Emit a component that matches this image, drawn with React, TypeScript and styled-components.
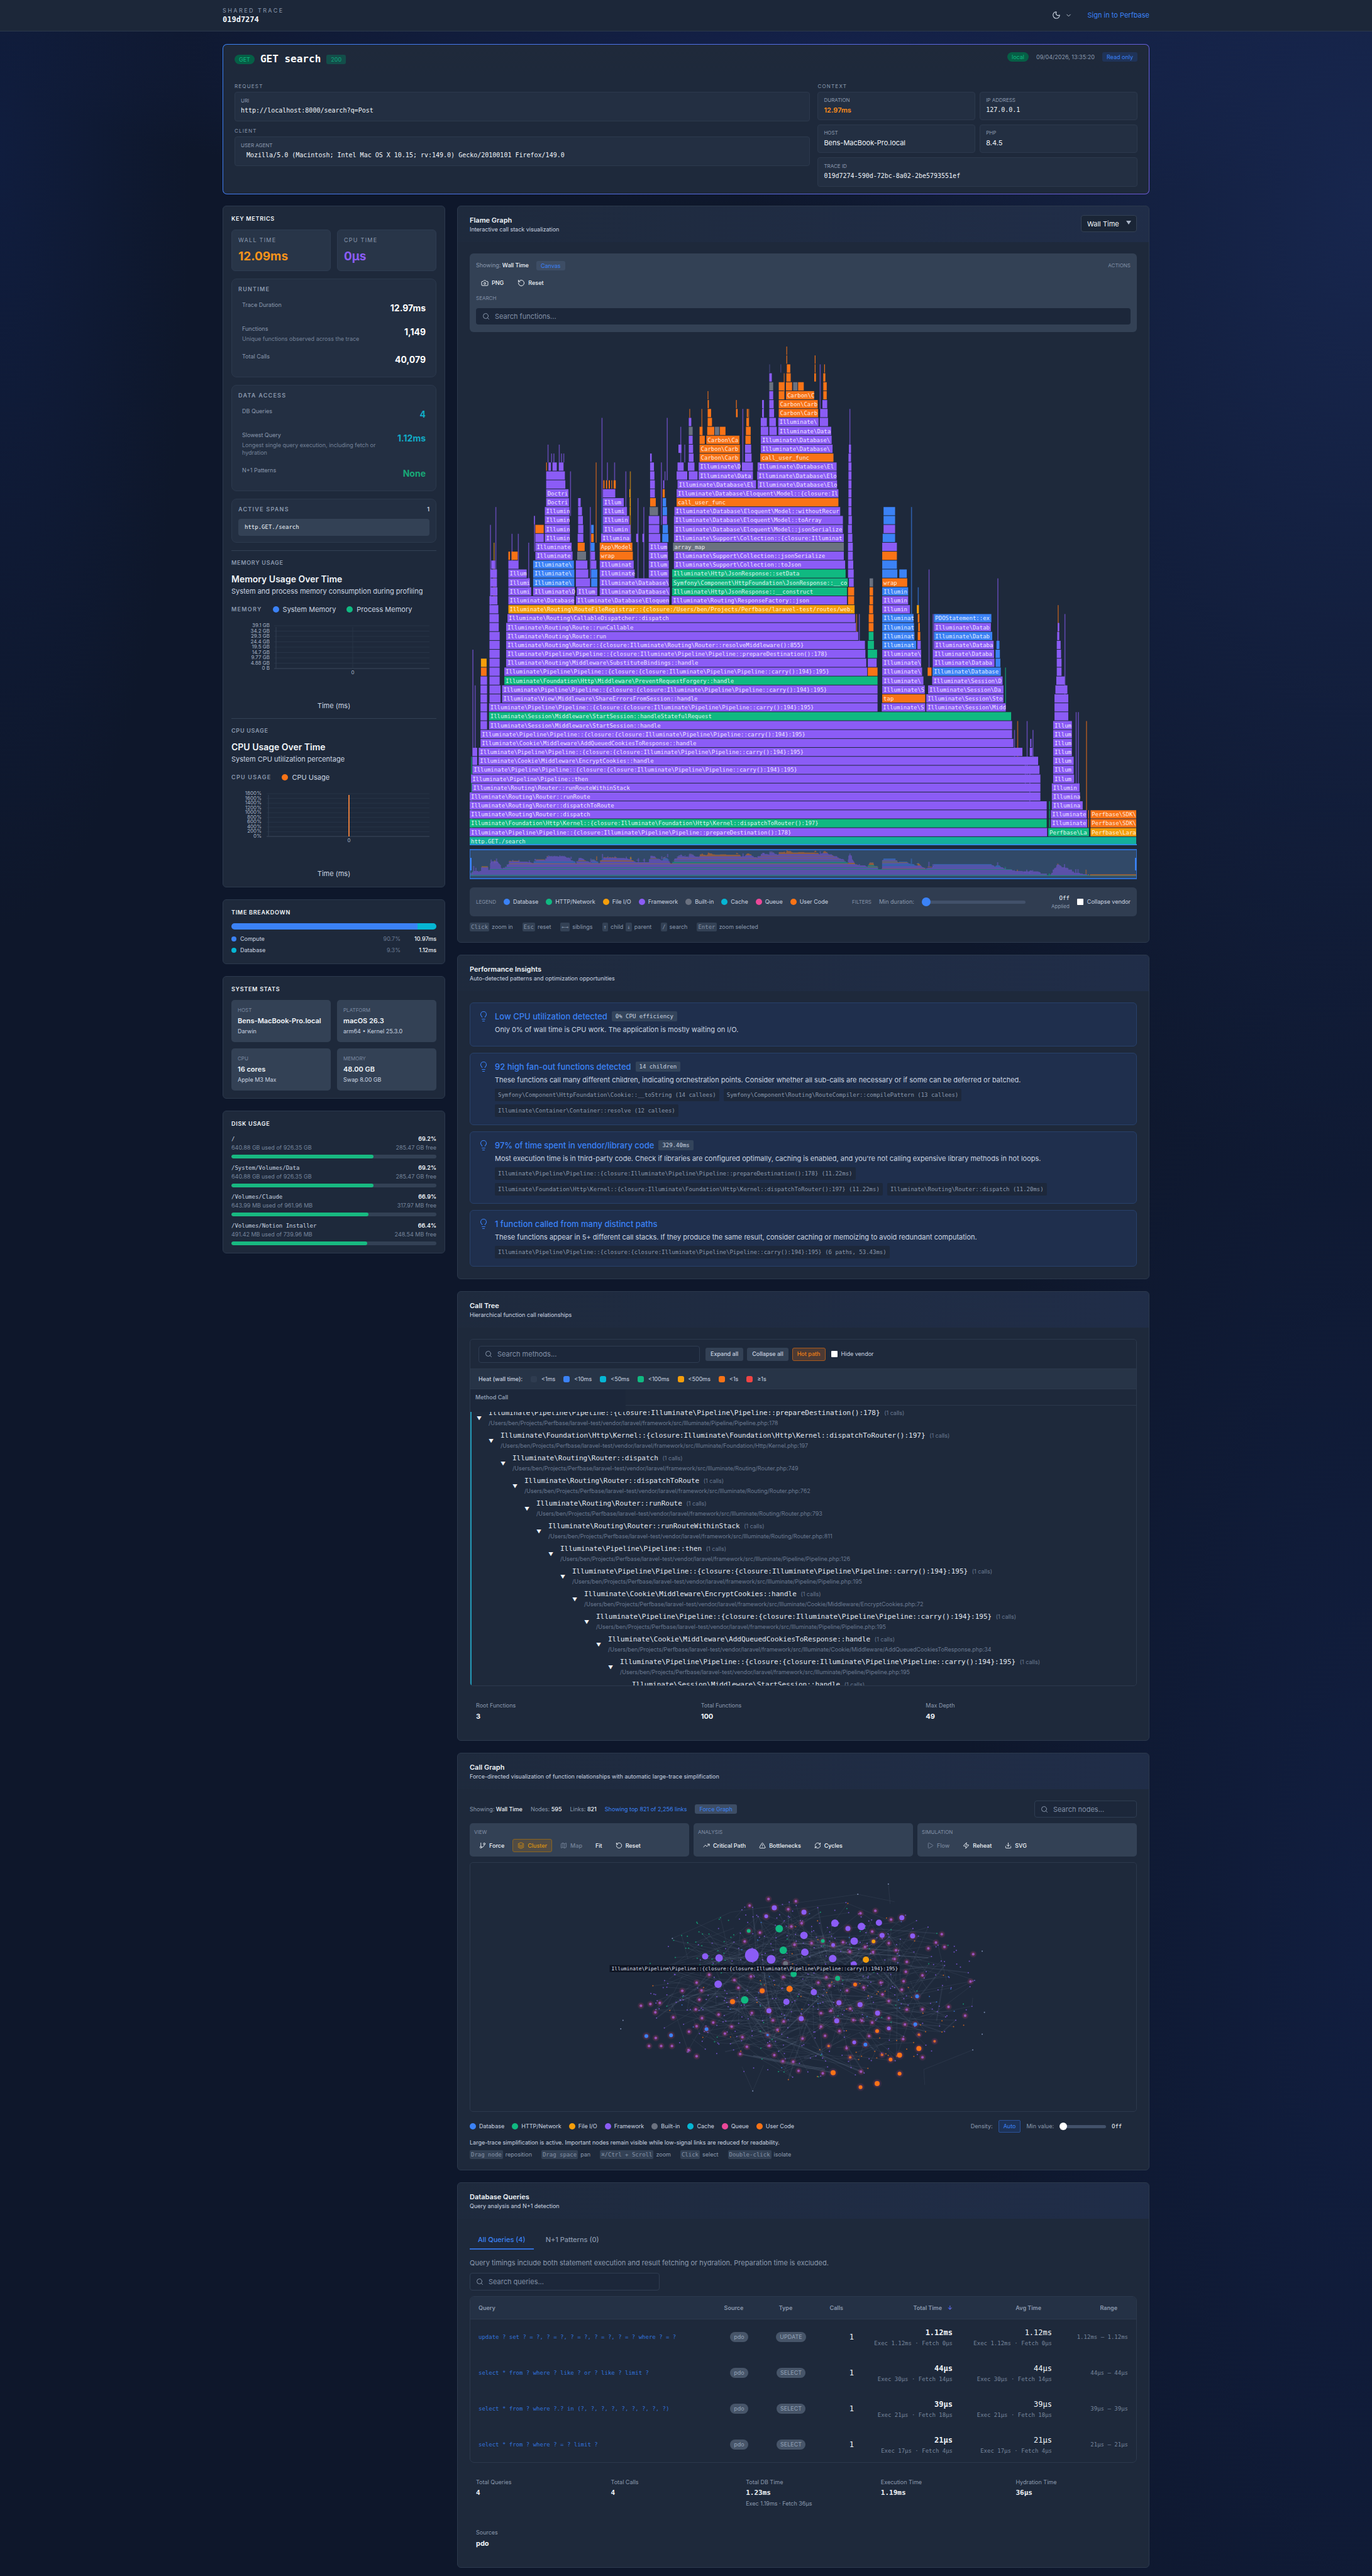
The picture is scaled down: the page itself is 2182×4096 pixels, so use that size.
import React from 'react';
import styled, { createGlobalStyle, css } from 'styled-components';
import {
  Camera, ChevronDown, Download, GitBranch, Layers, Lightbulb, Map as MapIcon, Moon, Play,
  RefreshCw, RotateCcw, Search, TrendingUp, TriangleAlert, Zap,
} from 'lucide-react';

const sans = `Inter, "Liberation Sans", sans-serif`;
const mono = `"DejaVu Sans Mono", "Liberation Mono", monospace`;

const c = {
  card: '#1e293b',
  inset: '#232f42',
  panel: '#334155',
  line: '#2c394d',
  text: '#f1f5f9',
  soft: '#cbd5e1',
  muted: '#8b99ae',
  dim: '#6b7a92',
  blue: '#3b82f6',
  green: '#10b981',
  amber: '#f59e0b',
  violet: '#8b5cf6',
  grey: '#6b7280',
  cyan: '#06b6d4',
  pink: '#ec4899',
  orange: '#f97316',
};

const Global = createGlobalStyle`
  *, *::before, *::after { box-sizing: border-box; }
  body {
    margin: 0;
    color: ${c.soft};
    font: 9px/14px ${sans};
    background:
      radial-gradient(ellipse 45% 38% at 100% 8%, #17264e 0%, rgba(23, 38, 78, 0) 100%),
      radial-gradient(ellipse 60% 6% at 60% 2%, #14214a 0%, rgba(20, 33, 74, 0) 100%),
      radial-gradient(ellipse 14% 30% at 0% 6%, #101d3e 0%, rgba(16, 29, 62, 0) 100%),
      radial-gradient(ellipse 30% 50% at 100% 75%, #111e40 0%, rgba(17, 30, 64, 0) 100%),
      #0e172b;
  }
  h1, h2, h3, p, dl, dd, ul { margin: 0; padding: 0; }
  ul { list-style: none; }
  a { text-decoration: none; }
  button, input, select { font: inherit; color: inherit; }
`;

/* ---------- page frame ---------- */

const Shell = styled.div`
  width: calc(100% - 40px);
  max-width: 1474px;
  margin: 0 auto;
`;

const TopBar = styled.header`
  background: #1c2739;
  border-bottom: 1px solid ${c.line};
`;

const TopInner = styled(Shell)`
  display: flex;
  justify-content: space-between;
  align-items: center;
  padding: 9px 0 10px;
`;

const TraceTag = styled.div`
  line-height: 15px;
  letter-spacing: 0.27em;
  color: ${c.muted};
`;

const TraceName = styled.div`
  font: 700 12px/15px ${mono};
  color: ${c.text};
`;

const TopActions = styled.div`
  display: flex;
  align-items: center;
  gap: 24px;
`;

const ThemeButton = styled.button`
  display: flex;
  align-items: center;
  gap: 7px;
  padding: 0;
  border: 0;
  background: none;
  color: ${c.soft};
`;

const SignIn = styled.a`
  font-size: 11px;
  color: ${c.blue};
`;

const Main = styled(Shell).attrs({ as: 'main' })`
  display: grid;
  grid-template-columns: 354px minmax(0, 1fr);
  align-items: start;
  gap: 18px 19px;
  padding: 20px 0 16px;
`;

const Column = styled.div`
  display: flex;
  flex-direction: column;
  gap: 19px;
  min-width: 0;
`;

/* ---------- hero ---------- */

const Hero = styled.section`
  grid-column: 1 / -1;
  border: 1px solid transparent;
  border-radius: 7px;
  background:
    linear-gradient(180deg, #1f293a, #1e293b 48px, #1e293b) padding-box,
    linear-gradient(135deg, ${c.blue}, #6d5bd8) border-box;
`;

const HeroHead = styled.div`
  display: flex;
  justify-content: space-between;
  align-items: flex-start;
  height: 45px;
  padding: 12px 18px 0;
`;

const HeroTitle = styled.div`
  display: flex;
  align-items: center;
  gap: 9px;
  height: 22px;
`;

const HeroName = styled.h1`
  font: 700 16px/22px ${mono};
  color: #fff;
`;

const HeroMeta = styled.div`
  display: flex;
  align-items: center;
  gap: 12px;
  color: ${c.muted};
`;

type Tone = 'green' | 'teal' | 'blue' | 'plain';
const tones = {
  green: css`background: #065f46; color: #10b981; border-radius: 8px;`,
  teal: css`background: #134e4a; color: #10a37a; border-radius: 3px;`,
  blue: css`background: #1f3358; color: ${c.blue}; border-radius: 3px;`,
  plain: css`background: #3d4d65; color: ${c.blue}; border-radius: 3px;`,
};
const Badge = styled.span<{ $tone: Tone }>`
  padding: 0 7px;
  line-height: 15px;
  ${({ $tone }) => tones[$tone]}
`;

const HeroBody = styled.div`
  display: grid;
  grid-template-columns: minmax(0, 9fr) minmax(0, 5fr);
  gap: 12px;
  padding: 16px 18px 11px;
`;

const GroupLabel = styled.h2`
  margin-bottom: 4px;
  font-size: 8px;
  font-weight: 400;
  line-height: 10px;
  letter-spacing: 0.15em;
  color: ${c.muted};
`;

const Stack = styled.div<{ $gap: number }>`
  display: flex;
  flex-direction: column;
  gap: ${({ $gap }) => $gap}px;
`;

const Pair = styled.div`
  display: grid;
  grid-template-columns: 1fr 1fr;
  gap: 7px;
`;

const Field = styled.div<{ $wide?: boolean }>`
  grid-column: ${({ $wide }) => ($wide ? '1 / -1' : 'auto')};
  padding: ${({ $wide }) => ($wide ? 7 : 6)}px 9px;
  border: 1px solid ${c.line};
  border-radius: 4px;
  background: ${c.inset};
`;

const FieldLabel = styled.div`
  margin-bottom: 1px;
  font-size: 8px;
  line-height: 12px;
  color: ${c.muted};
`;

const FieldValue = styled.div<{ $mono?: boolean; $hot?: boolean; $inset?: boolean }>`
  font: ${({ $mono, $hot }) =>
    $mono ? `400 10px/18px ${mono}` : `${$hot ? 600 : 400} 11px/18px ${sans}`};
  padding-left: ${({ $inset }) => ($inset ? 9 : 0)}px;
  color: ${({ $hot }) => ($hot ? '#fb8c1a' : c.text)};
`;

/* ---------- sidebar ---------- */

const SideCard = styled.section<{ $flush?: boolean }>`
  padding: 13px 13px ${({ $flush }) => ($flush ? 1 : 12)}px;
  border: 1px solid ${c.line};
  border-radius: 6px;
  background: ${c.card};
`;

const SideTitle = styled.h2`
  margin-bottom: 10px;
  font-size: 9px;
  line-height: 14px;
  font-weight: 600;
  letter-spacing: 0.08em;
  color: ${c.text};
`;

const TileGrid = styled.div`
  display: grid;
  grid-template-columns: 1fr 1fr;
  gap: 10px;
`;

const MetricTile = styled.div`
  padding: 9px 10px;
  border: 1px solid #2e3c51;
  border-radius: 6px;
  background: #283548;
`;

const SpacedLabel = styled.h3`
  font-size: 9px;
  line-height: 14px;
  font-weight: 400;
  letter-spacing: 0.14em;
  color: ${c.muted};
`;

const StrongLabel = styled(SpacedLabel)`
  font-weight: 600;
`;

const BigValue = styled.div<{ $color: string }>`
  margin-top: 6px;
  font-size: 19px;
  line-height: 26px;
  font-weight: 700;
  color: ${({ $color }) => $color};
`;

const Group = styled.div`
  margin-top: 12px;
  padding: 9px 10px 8px;
  border: 1px solid ${c.line};
  border-radius: 8px;
  background: ${c.inset};
`;

const StatRow = styled.div`
  display: flex;
  justify-content: space-between;
  gap: 16px;
  padding: 7px 6px;
  &:first-of-type { margin-top: 4px; }
`;

const StatText = styled.div`
  max-width: 220px;
  color: ${c.muted};
`;

const StatNote = styled.p`
  margin: 3px 0 1px;
  line-height: 12px;
  color: #748298;
`;

const StatValue = styled.div<{ $color?: string }>`
  font-size: 14px;
  line-height: 24px;
  font-weight: 700;
  color: ${({ $color }) => $color ?? '#fff'};
`;

const SpanHead = styled.div`
  display: flex;
  justify-content: space-between;
  font-weight: 600;
`;

const SpanChip = styled.div`
  margin: 8px 0 2px;
  padding: 0 10px;
  border-radius: 4px;
  background: ${c.panel};
  font: 9px/27px ${mono};
  color: ${c.text};
`;

const ChartSection = styled.section<{ $first?: boolean }>`
  margin-top: ${({ $first }) => ($first ? 12 : 0)}px;
  padding: 12px 0;
  border-top: 1px solid #334155;
`;

const ChartTag = styled(SideTitle)`
  margin: 0;
  color: ${c.muted};
`;

const ChartTitle = styled.h3`
  margin-top: 9px;
  font-size: 14px;
  line-height: 20px;
  font-weight: 600;
  color: ${c.text};
`;

const ChartSub = styled.p`
  margin-top: 1px;
  font-size: 11px;
  line-height: 16px;
`;

const ChartLegend = styled.div`
  display: flex;
  align-items: center;
  gap: 17px;
  margin-top: 13px;
  font-size: 11px;
  line-height: 16px;
`;

const Key = styled.span<{ $gap?: number }>`
  display: inline-flex;
  align-items: center;
  gap: ${({ $gap }) => $gap ?? 5}px;
`;

const Dot = styled.i<{ $color: string; $size?: number; $square?: boolean }>`
  width: ${({ $size }) => $size ?? 10}px;
  height: ${({ $size }) => $size ?? 10}px;
  border-radius: ${({ $square }) => ($square ? '3px' : '50%')};
  background: ${({ $color }) => $color};
`;

const Plot = styled.svg`
  display: block;
  width: 100%;
  margin-top: 8px;
`;

const AxisTitle = styled.div`
  margin-top: 3px;
  font-size: 11px;
  line-height: 16px;
  text-align: center;
`;

const SplitBar = styled.div`
  display: flex;
  height: 10px;
  margin-bottom: 6px;
  border-radius: 5px;
  overflow: hidden;
`;

const SplitPart = styled.div<{ $color: string }>`
  background: ${({ $color }) => $color};
`;

const BreakRow = styled.div`
  display: grid;
  grid-template-columns: 1fr auto 57px;
  line-height: 18px;
`;

const Share = styled.span`
  color: ${c.dim};
`;

const Amount = styled.span`
  text-align: right;
  font-weight: 500;
  color: ${c.text};
`;

const SystemTile = styled.div`
  padding: 10px;
  border-radius: 5px;
  background: ${c.panel};
`;

const TileLabel = styled.div`
  font-size: 8px;
  line-height: 13px;
  color: #7b8aa1;
`;

const TileValue = styled.div`
  margin: 1px 0;
  font-size: 11px;
  line-height: 18px;
  font-weight: 600;
  color: ${c.text};
`;

const DiskLine = styled.div<{ $dim?: boolean }>`
  display: flex;
  justify-content: space-between;
  line-height: ${({ $dim }) => ($dim ? 13 : 14)}px;
  color: ${({ $dim }) => ($dim ? '#76859b' : c.soft)};
`;

const DiskPath = styled.span`
  font-family: ${mono};
`;

const DiskPct = styled.strong`
  font-weight: 600;
  color: ${c.text};
`;

const DiskTrack = styled.div`
  height: 6px;
  margin-top: 5px;
  border-radius: 3px;
  background: ${c.panel};
  overflow: hidden;
`;

const DiskFill = styled.div`
  height: 100%;
  border-radius: 3px;
  background: #18b981;
`;

/* ---------- main cards ---------- */

const Card = styled.section`
  border: 1px solid ${c.line};
  border-radius: 6px;
  background: ${c.card};
  overflow: hidden;
`;

const CardHead = styled.header`
  display: flex;
  justify-content: space-between;
  height: 57px;
  padding: 14px 19px 0;
  background: linear-gradient(90deg, rgba(59, 130, 246, 0.01), rgba(59, 100, 246, 0.07));
`;

const CardTitle = styled.h2`
  font-size: 11px;
  line-height: 16px;
  font-weight: 600;
  color: ${c.text};
`;

const CardBody = styled.div`
  padding: 18px 19px 19px;
`;

const MetricSelect = styled.select`
  appearance: none;
  width: 89px;
  height: 27px;
  padding: 0 9px;
  border: 1px solid #334155;
  border-radius: 4px;
  background: #1a2536 url("data:image/svg+xml,%3Csvg xmlns='http://www.w3.org/2000/svg' width='8' height='6'%3E%3Cpath d='M0 0h8L4 6z' fill='%23aab6c8'/%3E%3C/svg%3E") no-repeat right 8px top 8px;
  font-size: 11px;
  color: ${c.text};
`;

const FlamePanel = styled.div`
  padding: 10px 10px 12px;
  border-radius: 6px;
  background: ${c.panel};
`;

const Line = styled.div<{ $gap: number; $top?: number; $between?: boolean }>`
  display: flex;
  align-items: center;
  justify-content: ${({ $between }) => ($between ? 'space-between' : 'flex-start')};
  gap: ${({ $gap }) => $gap}px;
  margin-top: ${({ $top }) => $top ?? 0}px;
`;

const Caption = styled.span`
  font-size: 8px;
  line-height: 12px;
  color: #8290a6;
`;

const BlockCaption = styled.label`
  display: block;
  margin: 8px 0 10px;
  font-size: 8px;
  line-height: 12px;
  color: #8290a6;
`;

const Muted = styled.span`
  line-height: 18px;
  color: ${c.muted};
  b { font-weight: 500; color: ${c.text}; }
`;

const ToolButton = styled.button<{ $on?: boolean; $off?: boolean }>`
  display: inline-flex;
  align-items: center;
  gap: 5px;
  height: 21px;
  padding: 0 7px;
  border: 1px solid ${({ $on }) => ($on ? '#8a6420' : 'transparent')};
  border-radius: 3px;
  background: ${({ $on }) => ($on ? '#514c44' : 'transparent')};
  font-weight: 500;
  color: ${({ $on, $off }) => ($on ? '#d9910f' : $off ? '#76849a' : c.text)};
`;

const SearchBox = styled.label<{ $width?: number; $height?: number; $bare?: boolean }>`
  display: flex;
  align-items: center;
  gap: 8px;
  width: ${({ $width }) => ($width ? `${$width}px` : '100%')};
  height: ${({ $height }) => $height ?? 27}px;
  padding: 0 9px;
  border: 1px solid ${({ $bare }) => ($bare ? 'transparent' : '#2f3d52')};
  border-radius: 4px;
  background: #1c273a;
  color: ${c.muted};
  svg { flex: none; }
`;

const SearchInput = styled.input`
  flex: 1;
  min-width: 0;
  padding: 0;
  border: 0;
  outline: 0;
  background: none;
  font-size: 11px;
  &::placeholder { color: #8290a6; opacity: 1; }
`;

const FlameSvg = styled.svg`
  display: block;
  width: 100%;
  margin-top: 23px;
`;

const MiniMap = styled.div`
  margin-top: 5px;
  height: 48px;
  border: solid #2f6fd0;
  border-width: 2px 1px;
  background: #314968;
  svg { display: block; width: 100%; height: 44px; }
`;

const LegendPanel = styled.div`
  display: flex;
  align-items: center;
  justify-content: space-between;
  height: 46px;
  margin-top: 13px;
  padding: 0 10px;
  border-radius: 6px;
  background: #303d51;
`;

const Range = styled.input<{ $width: number; $thumb: string; $size: number }>`
  appearance: none;
  width: ${({ $width }) => $width}px;
  height: 5px;
  margin: 0;
  border-radius: 3px;
  background: #42516a;
  &::-webkit-slider-thumb {
    appearance: none;
    width: ${({ $size }) => $size}px;
    height: ${({ $size }) => $size}px;
    border-radius: 50%;
    background: ${({ $thumb }) => $thumb};
  }
`;

const OffValue = styled.div`
  width: 58px;
  text-align: right;
  font: 9px/14px ${mono};
  color: ${c.text};
  small { display: block; font: 8px/12px ${sans}; color: ${c.muted}; }
`;

const GraphOff = styled(OffValue)`
  width: 40px;
  text-align: left;
`;

const Check = styled.input`
  appearance: none;
  width: 10px;
  height: 10px;
  margin: 0;
  border-radius: 1px;
  background: #fff;
`;

const Hints = styled.ul`
  display: flex;
  gap: 15px;
  margin: 10px 0 -2px;
  color: ${c.muted};
`;

const Hint = styled.li`
  display: flex;
  gap: 4px;
`;

const Kbd = styled.kbd`
  padding: 0 2px;
  border-radius: 2px;
  background: ${c.panel};
  font: 9px/14px ${mono};
  color: #8491a6;
`;

/* ---------- insights ---------- */

const Insight = styled.article`
  display: flex;
  gap: 9px;
  padding: 12px;
  border: 1px solid #28416b;
  border-radius: 6px;
  background: #1f2f4d;
  color: ${c.blue};
  & + & { margin-top: 10px; }
  > svg { flex: none; }
`;

const InsightTitle = styled.h3`
  font-size: 13px;
  line-height: 18px;
  font-weight: 500;
`;

const InsightTag = styled.span`
  padding: 0 6px;
  border-radius: 2px;
  background: #33445b;
  font: 9px/16px ${mono};
  color: ${c.soft};
`;

const InsightText = styled.p`
  margin: 3px 0 5px;
  font-size: 11px;
  line-height: 18px;
  color: ${c.soft};
`;

const Chips = styled.div`
  display: flex;
  flex-wrap: wrap;
  gap: 5px 7px;
`;

const Chip = styled.code`
  padding: 0 5px;
  border-radius: 2px;
  background: #1d283b;
  font: 9px/20px ${mono};
  color: ${c.muted};
`;

/* ---------- call tree ---------- */

const TreeBox = styled.div`
  border: 1px solid ${c.line};
  border-radius: 5px;
  overflow: hidden;
`;

const TreeTools = styled.div`
  display: flex;
  align-items: center;
  gap: 9px;
  height: 46px;
  padding: 0 13px;
`;

const SolidButton = styled.button<{ $hot?: boolean }>`
  height: 21px;
  padding: 0 7px;
  border: 1px solid ${({ $hot }) => ($hot ? '#a85a1e' : 'transparent')};
  border-radius: 3px;
  background: ${({ $hot }) => ($hot ? '#4d3a33' : c.panel)};
  font-weight: 500;
  color: ${({ $hot }) => ($hot ? '#f07f16' : c.soft)};
`;

const HeatBar = styled.div`
  display: flex;
  align-items: center;
  gap: 13px;
  height: 33px;
  padding: 0 13px;
  border: solid ${c.line};
  border-width: 1px 0;
  background: #273447;
  b { font-weight: 500; }
`;

const TreeHead = styled.div`
  height: 26px;
  border-bottom: 1px solid ${c.line};
`;

const TreeHeadCell = styled.div`
  position: relative;
  width: 247px;
  height: 36px;
  padding: 6px 8px;
  background: #1c273a;
  font-weight: 600;
  color: ${c.muted};
`;

const TreeList = styled.div`
  height: 445px;
  padding-top: 4px;
  border-left: 2px solid #2197b5;
  overflow: hidden;
`;

const TreeRow = styled.div<{ $depth: number }>`
  display: flex;
  align-items: center;
  gap: 8px;
  height: 36px;
  padding: 0 0 5px ${({ $depth }) => 5 + $depth * 19}px;
`;

const Caret = styled.button`
  width: 14px;
  padding: 0;
  border: 0;
  background: none;
  font-size: 8px;
  color: ${c.text};
`;

const TreeName = styled.div`
  font: 11px/16px ${mono};
  color: #e2e8f0;
  white-space: nowrap;
  small { font: 9px/16px ${sans}; color: ${c.dim}; }
`;

const TreePath = styled.div`
  margin-top: 1px;
  color: ${c.dim};
  white-space: nowrap;
`;

const StatGrid = styled.dl<{ $cols: number }>`
  display: grid;
  grid-template-columns: repeat(${({ $cols }) => $cols}, minmax(0, 1fr));
  gap: 12px;
  margin-top: 14px;
`;

const Stat = styled.div`
  padding: 10px;
  dt { color: ${c.muted}; }
`;

const StatFigure = styled.dd<{ $mono?: boolean }>`
  margin-top: 1px;
  font: 700 11px/18px ${({ $mono }) => ($mono ? mono : sans)};
  color: ${c.text};
`;

const StatExtra = styled.dd`
  margin-top: 1px;
  color: ${c.muted};
`;

/* ---------- call graph ---------- */

const PanelRow = styled.div`
  display: grid;
  grid-template-columns: repeat(3, minmax(0, 1fr));
  gap: 7px;
  margin: 9px 0;
`;

const ToolPanel = styled.div`
  height: 53px;
  padding: 7px;
  border-radius: 5px;
  background: ${c.panel};
`;

const GraphFrame = styled.div`
  border: 1px solid ${c.line};
  border-radius: 5px;
  overflow: hidden;
  svg { display: block; width: 100%; }
`;

const AutoButton = styled.button`
  height: 20px;
  padding: 0 7px;
  border: 1px solid #2a5199;
  border-radius: 2px;
  background: #1d3359;
  color: ${c.blue};
`;

const GraphNote = styled.p`
  margin: 8px 0 -6px;
  line-height: 16px;
  color: ${c.soft};
`;

const LinkNote = styled.span`
  color: ${c.blue};
`;

/* ---------- queries ---------- */

const Tabs = styled.div`
  display: flex;
  gap: 6px;
`;

const Tab = styled.button<{ $on?: boolean }>`
  padding: 6px 13px 5px;
  border: 0;
  border-bottom: 2px solid ${({ $on }) => ($on ? '#336fd6' : 'transparent')};
  background: none;
  font-size: 11px;
  line-height: 18px;
  font-weight: 500;
  color: ${({ $on }) => ($on ? c.blue : c.muted)};
`;

const Intro = styled.p`
  margin: 12px 0 7px;
  font-size: 11px;
  line-height: 18px;
  color: ${c.muted};
`;

const TableFrame = styled.div`
  margin-top: 9px;
  border: 1px solid ${c.line};
  border-radius: 7px;
  overflow: hidden;
`;

const Table = styled.table`
  width: 100%;
  table-layout: fixed;
  border-collapse: collapse;
`;

const Col = styled.col<{ $width?: number }>`
  width: ${({ $width }) => ($width ? `${$width}px` : 'auto')};
`;

type Align = 'left' | 'center' | 'right';

const Th = styled.th<{ $align?: Align }>`
  height: 35px;
  padding: 0 13px;
  border-bottom: 1px solid ${c.line};
  background: #243145;
  text-align: ${({ $align }) => $align ?? 'left'};
  font-weight: 600;
  white-space: nowrap;
  color: ${c.muted};
`;

const SortMark = styled.span`
  display: inline-block;
  width: 17px;
  color: #5b6cf0;
`;

const Td = styled.td<{ $align?: Align }>`
  height: 57px;
  padding: 0 13px;
  text-align: ${({ $align }) => $align ?? 'left'};
  font-family: ${mono};
  white-space: nowrap;
  color: #77869c;
`;

const QueryText = styled.a`
  color: #3273dc;
`;

const Pill = styled.span`
  display: inline-block;
  padding: 0 6px;
  border-radius: 8px;
  background: #475569;
  font: 9px/16px ${sans};
  color: #94a3b8;
`;

const CellFigure = styled.div<{ $bold?: boolean }>`
  font-size: 12px;
  line-height: 20px;
  font-weight: ${({ $bold }) => ($bold ? 700 : 400)};
  color: ${c.text};
`;

/* ---------- flame graph data ---------- */

const NS = 'Illuminate\\';
const PIPE = `${NS}Pipeline\\Pipeline::{closure:{closure:${NS}Pipeline\\Pipeline::carry():194}:195}`;
const PREP = `${NS}Pipeline\\Pipeline::{closure:${NS}Pipeline\\Pipeline::prepareDestination():178}`;
const KERN = `${NS}Foundation\\Http\\Kernel::{closure:${NS}Foundation\\Http\\Kernel::dispatchToRouter():197}`;
const DB = `${NS}Database\\Eloquent\\Builder::get`;
const SES = `${NS}Session\\`;

const shade: Record<string, string> = {
  v: c.violet, g: c.green, b: c.blue, o: c.orange, a: c.amber, s: c.grey, t: '#14b09c', d: '#4a4a8a',
};

/* each row, from the root up: colour, start, end, label */
type Frame = [string, number, number, string?];
const T0 = 40;
const T1 = 1523;
const rows: Frame[][] = [
  [['t', 40, 1523, 'http.GET./search']],
  [['v', 40, 1325, PREP], ['g', 1326, 1418, 'Perfbase\\Laravel\\Middleware'], ['a', 1420, 1523, 'Perfbase\\Laravel\\Trace']],
  [['g', 40, 1324, KERN], ['g', 1328, 1331], ['v', 1332, 1414, DB], ['o', 1415, 1418], ['o', 1420, 1523, 'Perfbase\\SDK\\Client']],
  [['v', 40, 1324, `${NS}Routing\\Router::dispatch`], ['g', 1328, 1331], ['v', 1332, 1413, DB], ['o', 1415, 1418], ['o', 1420, 1523, 'Perfbase\\SDK\\Client']],
  [['v', 40, 1324, `${NS}Routing\\Router::dispatchToRoute`], ['g', 1328, 1331], ['v', 1334, 1404, DB]],
  [['v', 40, 1310, `${NS}Routing\\Router::runRoute`], ['v', 1334, 1398, DB]],
  [['v', 45, 1310, `${NS}Routing\\Router::runRouteWithinStack`], ['v', 1334, 1397, DB]],
  [['v', 43, 1310, `${NS}Pipeline\\Pipeline::then`], ['v', 1337, 1385, DB]],
  [['v', 46, 1308, PIPE], ['v', 1337, 1384, DB]],
  [['v', 46, 58], ['v', 60, 1305, `${NS}Cookie\\Middleware\\EncryptCookies::handle`], ['v', 1337, 1384, DB]],
  [['v', 46, 58], ['v', 60, 1270, PIPE], ['v', 1285, 1292], ['v', 1337, 1380, DB]],
  [['v', 64, 1250, `${NS}Cookie\\Middleware\\AddQueuedCookiesToResponse::handle`], ['v', 1286, 1290], ['v', 1337, 1380, DB]],
  [['v', 64, 1247, PIPE], ['v', 1337, 1380, DB]],
  [['v', 64, 80], ['v', 83, 1247, `${SES}Middleware\\StartSession::handle`], ['v', 1337, 1380, DB]],
  [['v', 64, 80], ['g', 83, 1245, `${SES}Middleware\\StartSession::handleStatefulRequest`], ['v', 1340, 1372]],
  [['v', 64, 80], ['v', 83, 948, PIPE], ['v', 956, 1054, `${SES}Store`], ['v', 1055, 1233, `${SES}Middleware\\StartSession`], ['v', 1340, 1372]],
  [['v', 64, 80], ['v', 84, 110], ['v', 112, 948, `${NS}View\\Middleware\\ShareErrorsFromSession::handle`], ['o', 957, 1054, 'tap'], ['v', 1055, 1228, `${SES}Store::loadSession`], ['v', 1340, 1372]],
  [['v', 64, 80], ['v', 84, 110], ['v', 112, 948, PIPE], ['v', 957, 1053, `${SES}Store`], ['v', 1059, 1228, `${SES}DatabaseSessionHandler`], ['v', 1342, 1370]],
  [['v', 64, 80], ['v', 84, 108], ['g', 117, 948, `${NS}Foundation\\Http\\Middleware\\PreventRequestForgery::handle`], ['v', 957, 1050, `${SES}Store`], ['v', 1068, 1226, `${SES}DatabaseSessionHandler`], ['v', 1344, 1364]],
  [['o', 65, 79], ['v', 84, 108], ['v', 117, 925, PIPE], ['o', 925, 948], ['v', 957, 1047, DB], ['o', 1058, 1068], ['b', 1069, 1222, DB], ['v', 1345, 1357]],
  [['a', 65, 79], ['v', 84, 108], ['v', 121, 923, `${NS}Routing\\Middleware\\SubstituteBindings::handle`], ['v', 925, 946], ['v', 957, 1045, DB], ['v', 1070, 1208, DB], ['b', 1209, 1221], ['v', 1345, 1357]],
  [['v', 84, 108], ['v', 121, 921, PREP], ['g', 925, 947], ['v', 957, 1045, DB], ['v', 1070, 1207, DB], ['b', 1209, 1220], ['v', 1345, 1356]],
  [['v', 84, 108], ['v', 121, 920, `${NS}Routing\\Router::{closure:${NS}Routing\\Router::resolveMiddleware():855}`], ['g', 925, 940], ['b', 957, 1034, DB], ['v', 1035, 1044], ['v', 1072, 1206, DB], ['b', 1211, 1219], ['v', 1345, 1355]],
  [['v', 84, 108], ['v', 121, 905, `${NS}Routing\\Route::run`], ['g', 927, 939], ['b', 957, 1030, DB], ['o', 1036, 1043], ['b', 1072, 1203, DB], ['v', 1346, 1352]],
  [['v', 84, 106], ['v', 121, 900, `${NS}Routing\\Route::runCallable`], ['o', 927, 939], ['b', 957, 1029, DB], ['o', 1037, 1042], ['v', 1072, 1200, DB], ['v', 1347, 1352]],
  [['v', 84, 106], ['v', 124, 898, `${NS}Routing\\CallableDispatcher::dispatch`], ['o', 927, 939], ['b', 957, 1028, DB], ['o', 1036, 1041], ['b', 1072, 1201, 'PDOStatement::execute']],
  [['v', 84, 105], ['a', 126, 897, `${NS}Routing\\RouteFileRegistrar::{closure:/Users/ben/Projects/Perfbase/laravel-test/routes/web.php:17}`], ['o', 928, 938], ['v', 957, 1020, DB], ['a', 1034, 1040]],
  [['v', 84, 103], ['v', 126, 274, DB], ['v', 276, 485, DB], ['v', 489, 880, `${NS}Routing\\ResponseFactory::json`], ['o', 881, 896], ['o', 929, 938], ['v', 957, 1016, DB]],
  [['v', 86, 103], ['v', 126, 178, DB], ['v', 181, 275, DB], ['v', 278, 325, DB], ['v', 329, 486, DB], ['g', 490, 880, `${NS}Http\\JsonResponse::__construct`], ['o', 881, 896], ['o', 929, 938], ['b', 957, 1016, DB]],
  [['v', 86, 102], ['v', 126, 175, DB], ['b', 181, 274, DB], ['v', 276, 309], ['b', 310, 325], ['v', 329, 484, DB], ['g', 490, 882, 'Symfony\\Component\\HttpFoundation\\JsonResponse::__construct'], ['v', 883, 895], ['s', 929, 938], ['o', 957, 1014, 'wrap']],
  [['v', 86, 102], ['v', 126, 168, DB], ['b', 181, 274, DB], ['v', 276, 305], ['b', 310, 325], ['v', 329, 408, DB], ['v', 438, 484, DB], ['g', 490, 877, `${NS}Http\\JsonResponse::setData`], ['v', 881, 895], ['b', 957, 992], ['b', 995, 1013]],
  [['v', 88, 98], ['v', 126, 150], ['b', 181, 273, DB], ['v', 276, 303], ['v', 309, 323], ['v', 329, 406, DB], ['v', 438, 484, DB], ['v', 494, 876, `${NS}Support\\Collection::toJson`], ['v', 881, 894], ['b', 957, 991]],
  [['o', 126, 131], ['o', 133, 148], ['v', 186, 270, DB], ['s', 279, 300], ['v', 309, 320], ['o', 329, 404, 'wrap'], ['v', 438, 482, DB], ['v', 494, 873, `${NS}Support\\Collection::jsonSerialize`], ['v', 881, 893], ['o', 957, 991]],
  [['v', 186, 268, DB], ['o', 280, 297], ['b', 309, 319], ['o', 329, 403, 'App\\Models\\Post'], ['v', 438, 481, DB], ['s', 492, 873, 'array_map'], ['v', 881, 893], ['v', 957, 991]],
  [['v', 186, 206], ['v', 207, 264, DB], ['v', 280, 294], ['o', 310, 317], ['v', 332, 400, DB], ['v', 410, 416], ['v', 424, 429], ['v', 438, 465], ['b', 468, 483], ['v', 494, 873, `${NS}Support\\Collection::{closure:${NS}Support\\Collection`], ['v', 881, 892], ['b', 958, 987]],
  [['o', 186, 206], ['v', 207, 264, DB], ['v', 281, 294], ['b', 310, 317], ['v', 336, 399, DB], ['v', 438, 463], ['b', 469, 482], ['v', 494, 871, `${NS}Database\\Eloquent\\Model::jsonSerialize`], ['v', 881, 891], ['v', 960, 987]],
  [['v', 183, 186], ['v', 207, 263, DB], ['v', 281, 293], ['v', 336, 396, DB], ['v', 438, 463], ['v', 469, 480], ['v', 494, 871, `${NS}Database\\Eloquent\\Model::toArray`], ['v', 882, 891], ['b', 960, 987]],
  [['v', 207, 263, DB], ['v', 281, 291], ['v', 336, 391, DB], ['a', 396, 399], ['s', 440, 460], ['b', 469, 480], ['v', 495, 865, `${NS}Database\\Eloquent\\Model::withoutRecursion`], ['v', 882, 890], ['b', 960, 987]],
  [['v', 210, 262, 'Doctrine\\Inflector'], ['v', 281, 288], ['v', 336, 384, DB], ['a', 396, 399], ['o', 441, 455], ['b', 469, 478], ['o', 500, 861, 'call_user_func'], ['v', 882, 890]],
  [['v', 210, 261, 'Doctrine\\Inflector'], ['v', 336, 365], ['v', 441, 453], ['o', 469, 475], ['v', 500, 861, `${NS}Database\\Eloquent\\Model::{closure:${NS}Database`], ['v', 882, 890], ['a', 395, 398]],
  [['v', 210, 254], ['o', 337, 341], ['o', 343, 347], ['o', 349, 353], ['o', 355, 358], ['o', 360, 366], ['v', 441, 453], ['v', 470, 474], ['v', 502, 678, DB], ['v', 680, 858, DB], ['v', 882, 890]],
  [['v', 210, 253], ['v', 441, 452], ['v', 500, 525], ['v', 527, 548], ['v', 549, 671, DB], ['v', 679, 857, DB], ['v', 882, 890]],
  [['o', 210, 213], ['v', 215, 222], ['v', 224, 235], ['v', 238, 250], ['v', 441, 451], ['v', 502, 517], ['v', 525, 541], ['v', 549, 643, DB], ['v', 645, 671], ['v', 680, 857, DB], ['v', 882, 890]],
  [['v', 441, 446], ['v', 527, 539], ['o', 551, 642, 'Carbon\\Carbon::format'], ['v', 652, 668], ['o', 686, 850, 'call_user_func'], ['v', 882, 889]],
  [['v', 504, 512], ['v', 527, 538], ['o', 551, 642, 'Carbon\\Carbon::format'], ['v', 652, 667], ['v', 687, 848, DB], ['v', 883, 889]],
  [['v', 527, 537], ['o', 551, 564], ['o', 566, 641, 'Carbon\\Carbon'], ['o', 653, 666], ['v', 687, 846, DB]],
  [['s', 527, 537], ['o', 551, 559], ['o', 568, 585], ['s', 585, 596], ['o', 596, 610], ['o', 654, 666], ['v', 687, 705], ['v', 706, 724], ['v', 726, 845, DB]],
  [['v', 527, 534], ['o', 569, 580], ['o', 655, 662], ['v', 687, 702], ['v', 706, 722], ['v', 726, 817, DB], ['v', 818, 838]],
  [['o', 569, 578], ['o', 632, 637], ['o', 656, 660], ['v', 690, 695], ['v', 706, 718], ['o', 727, 816, 'Carbon\\Carbon::format'], ['v', 819, 837]],
  [['o', 569, 573], ['o', 632, 635], ['v', 690, 695], ['v', 706, 717], ['o', 727, 815, 'Carbon\\Carbon::format'], ['v', 824, 836]],
  [['o', 569, 571], ['v', 706, 716], ['o', 727, 741], ['o', 743, 807, 'Carbon\\Carbon'], ['o', 826, 835]],
  [['s', 706, 716], ['o', 727, 741], ['o', 743, 758], ['s', 759, 770], ['o', 770, 784], ['o', 826, 835]],
  [['v', 706, 713], ['o', 744, 755], ['o', 806, 811], ['o', 826, 832]],
  [['d', 706, 708], ['d', 731, 733], ['o', 745, 754], ['o', 807, 810], ['o', 828, 831]],
  [['o', 744, 747], ['o', 807, 810]],
  [['o', 744, 746]],
];

/* thin frames: colour, position, first row, last row */
const spikes: [string, number, number, number][] = [
  ['v', 85, 27, 35], ['a', 93, 28, 33], ['v', 97, 28, 37], ['v', 133, 32, 34], ['v', 147, 32, 34], ['v', 170, 29, 33], ['v', 183, 33, 36],
  ['v', 213, 43, 44], ['v', 238, 43, 44], ['v', 221, 43, 43], ['v', 226, 43, 43], ['v', 243, 43, 43], ['v', 248, 43, 43], ['v', 263, 37, 41],
  ['v', 284, 38, 38], ['v', 307, 30, 37], ['o', 320, 34, 42], ['b', 333, 34, 38], ['v', 333, 39, 47], ['v', 345, 41, 42], ['v', 361, 41, 42],
  ['v', 386, 37, 41], ['a', 396, 35, 41], ['v', 413, 30, 38], ['v', 426, 30, 37], ['v', 465, 36, 42], ['v', 473, 41, 41], ['v', 478, 41, 47],
  ['v', 508, 43, 46], ['v', 517, 43, 44], ['o', 528, 48, 48], ['o', 555, 46, 48], ['v', 646, 43, 48], ['o', 659, 47, 48],
  ['v', 692, 47, 49], ['o', 738, 51, 52], ['v', 818, 49, 53], ['v', 884, 44, 48], ['o', 899, 24, 25], ['v', 905, 23, 25], ['b', 1021, 26, 37],
  ['v', 1060, 20, 30], ['b', 1036, 27, 28], ['v', 1213, 23, 29], ['g', 1230, 16, 19], ['v', 1250, 10, 12], ['o', 1257, 10, 13], ['v', 1274, 7, 9],
  ['v', 1278, 8, 13], ['v', 1291, 10, 12], ['v', 1284, 5, 8], ['o', 1347, 24, 26], ['v', 1362, 17, 25], ['v', 1387, 7, 14], ['v', 1392, 7, 14],
  ['o', 1410, 4, 13], ['v', 46, 11, 21], ['v', 51, 11, 17], ['g', 43, 2, 9], ['v', 1069, 19, 25],
];

const FlameFrames = ({ width, height, labels }: { width: number; height: number; labels?: boolean }) => {
  const rh = height / rows.length;
  const sx = width / (T1 - T0);
  const gap = labels ? 1 : 0;
  return (
    <>
      {spikes.map(([k, x, a, b], i) => (
        <rect key={`s${i}`} x={(x - T0) * sx} y={height - (b + 1) * rh} width={labels ? 1.6 : 2} height={(b - a + 1) * rh} fill={shade[k]} opacity={0.6} />
      ))}
      {rows.map((row, r) =>
        row.map(([k, a, b, label], i) => {
          const x = (a - T0) * sx;
          const w = Math.max(1, (b - a) * sx - gap);
          const y = height - (r + 1) * rh;
          return (
            <g key={`${r}-${i}`}>
              <rect x={x} y={y} width={w} height={rh - gap} fill={shade[k]} />
              {labels && label && (
                <text x={x + 2} y={y + 10} fontSize="9" fontFamily={mono} fill="#fff" fillOpacity="0.88">
                  {label.slice(0, Math.floor((w - 1) / 5.42))}
                </text>
              )}
            </g>
          );
        }),
      )}
    </>
  );
};

/* ---------- call graph data ---------- */

const GW = 1061;
const GH = 396;

const hubs: [string, number, number, number][] = [
  ['v', 667, 756, 11], ['v', 710, 771, 7], ['v', 783, 684, 6], ['v', 852, 640, 6], ['v', 911, 652, 6], ['v', 881, 659, 4], ['v', 950, 638, 5],
  ['v', 1001, 620, 4], ['v', 895, 705, 6], ['v', 785, 745, 6], ['v', 847, 768, 6], ['v', 894, 789, 5], ['v', 563, 760, 5], ['v', 594, 766, 6],
  ['v', 592, 861, 6], ['v', 805, 890, 5], ['v', 744, 925, 5], ['v', 777, 986, 4], ['v', 705, 957, 4], ['v', 861, 928, 4], ['v', 908, 935, 4],
  ['v', 947, 966, 4], ['v', 856, 994, 4], ['v', 972, 1021, 3], ['v', 895, 1072, 3], ['v', 1025, 686, 4], ['v', 783, 600, 4], ['v', 717, 584, 4],
  ['v', 699, 615, 3], ['v', 957, 684, 4], ['v', 848, 719, 3], ['g', 728, 660, 6], ['g', 737, 738, 6], ['g', 660, 668, 3], ['g', 825, 704, 3],
  ['g', 760, 824, 5], ['g', 858, 840, 4], ['g', 651, 918, 6], ['o', 751, 878, 5], ['o', 690, 885, 4], ['o', 624, 924, 4], ['o', 897, 862, 3],
  ['a', 921, 772, 5], ['a', 938, 706, 3], ['o', 946, 1031, 3], ['o', 996, 1118, 4], ['o', 976, 1134, 3], ['o', 946, 1221, 4], ['o', 909, 1234, 3],
  ['o', 848, 1182, 4], ['o', 1039, 1094, 4], ['o', 996, 1185, 3], ['b', 566, 1024, 3], ['b', 702, 1045, 2], ['b', 920, 1080, 3], ['b', 1035, 905, 3],
  ['b', 487, 1046, 3], ['b', 432, 1049, 3], ['b', 1031, 1006, 3], ['s', 742, 786, 4],
];

const glows: [number, number][] = [
  [704, 552], [765, 560], [662, 576], [748, 589], [909, 604], [942, 595], [778, 640], [755, 652], [685, 674], [651, 706], [762, 718], [1090, 680],
  [1077, 710], [1096, 726], [1060, 731], [1160, 752], [977, 627], [935, 670], [972, 712], [988, 738], [919, 726], [985, 770], [1012, 780],
  [937, 744], [885, 743], [870, 709], [800, 712], [544, 855], [555, 884], [512, 885], [550, 917], [441, 933], [420, 939], [462, 929], [452, 963],
  [492, 981], [593, 971], [542, 952], [556, 984], [527, 1033], [581, 1000], [607, 1040], [622, 1015], [544, 1013], [453, 1056], [438, 1085],
  [465, 1085], [489, 1085], [526, 1100], [544, 1122], [646, 1053], [656, 1088], [641, 1114], [706, 1084], [717, 1118], [736, 1140], [759, 1142],
  [771, 1175], [825, 1184], [886, 1126], [910, 1178], [838, 1085], [878, 1093], [830, 1048], [862, 1031], [821, 1015], [780, 1058], [738, 996],
  [714, 992], [724, 1026], [821, 966], [843, 957], [886, 950], [935, 1000], [928, 1049], [972, 984], [1012, 953], [1047, 952], [1105, 943],
  [1142, 975], [1154, 851], [972, 922], [958, 898], [954, 855], [916, 873], [879, 884], [1001, 881], [1005, 850], [1010, 816], [1047, 829],
  [815, 855], [833, 836], [840, 866], [737, 835], [665, 833], [628, 846], [637, 874], [572, 827], [1008, 1007], [1039, 1044], [1004, 1060],
  [1074, 1068], [1047, 1126], [957, 1117], [893, 991], [912, 993], [667, 965],
];

const gx = (x: number) => ((x - T0) / (T1 - T0)) * GW;
const gy = (y: number) => ((y - 421) / 901) * GH;

const makeRandom = (seed: number) => () => {
  seed = (seed * 1664525 + 1013904223) % 4294967296;
  return seed / 4294967296;
};

const rand = makeRandom(7);
const specks = Array.from({ length: 520 }, () => {
  const a = rand() * Math.PI * 2;
  const r = Math.sqrt(rand());
  const x = 795 + Math.cos(a) * r * 375;
  const y = 880 + Math.sin(a) * r * 330;
  const p = rand();
  const k = x > 880 && y > 1000 ? (p < 0.6 ? 'o' : 'v') : x < 640 && y < 820 ? (p < 0.6 ? 'g' : 'v') : p < 0.72 ? 'v' : p < 0.8 ? 'b' : p < 0.88 ? 'g' : 'o';
  return { x, y, k };
});
const links = Array.from({ length: 560 }, () => {
  const a = specks[Math.floor(rand() * specks.length)];
  const near = specks[Math.floor(rand() * specks.length)];
  const t = 0.15 + rand() * 0.5;
  return { a, b: { x: a.x + (near.x - a.x) * t, y: a.y + (near.y - a.y) * t }, w: rand() > 0.9 ? 2 : 1 };
});

const outliers = [[971, 498], [903, 535], [669, 1248], [1180, 741], [1185, 963], [375, 1023], [380, 992], [490, 695], [1159, 1099], [1180, 1042]];
const strands = [
  [[490, 695], [620, 600], [903, 535], [985, 562]],
  [[645, 1160], [669, 1248], [693, 1155]],
  [[971, 498], [975, 570]],
  [[1159, 1099], [1050, 1170], [1052, 1226]],
];
const trunks = [
  [628, 846, 705, 957], [742, 786, 830, 740], [830, 740, 1060, 765], [641, 1114, 848, 1182], [680, 1030, 771, 1085],
  [771, 1085, 910, 1178], [760, 712, 985, 740], [741, 830, 940, 850], [940, 780, 1005, 900], [670, 1120, 830, 1170],
];

const CallGraph = () => (
  <svg viewBox={`0 0 ${GW} ${GH}`} role="img" aria-label="Call graph">
    <defs>
      <radialGradient id="halo">
        <stop offset="0" stopColor="#d9407a" stopOpacity="0.5" />
        <stop offset="1" stopColor="#d9407a" stopOpacity="0" />
      </radialGradient>
    </defs>
    <g stroke="#7c8da8" strokeOpacity="0.13">
      {links.map((l, i) => (
        <line key={i} x1={gx(l.a.x)} y1={gy(l.a.y)} x2={gx(l.b.x)} y2={gy(l.b.y)} strokeWidth={l.w} />
      ))}
      {strands.map((s, i) => (
        <polyline key={i} points={s.map(([x, y]) => `${gx(x)},${gy(y)}`).join(' ')} fill="none" />
      ))}
    </g>
    <g stroke="#7c8da8" strokeOpacity="0.22" strokeWidth="2">
      {trunks.map(([a, b, d, e], i) => (
        <line key={i} x1={gx(a)} y1={gy(b)} x2={gx(d)} y2={gy(e)} />
      ))}
    </g>
    {specks.map((s, i) => (
      <circle key={i} cx={gx(s.x)} cy={gy(s.y)} r="1" fill={shade[s.k]} opacity="0.75" />
    ))}
    {outliers.map(([x, y], i) => (
      <circle key={i} cx={gx(x)} cy={gy(y)} r="1" fill="#7d8fb5" />
    ))}
    {glows.map(([x, y], i) => (
      <g key={i}>
        <circle cx={gx(x)} cy={gy(y)} r="6" fill="url(#halo)" />
        <circle cx={gx(x)} cy={gy(y)} r="2" fill={x > 830 && y > 1000 && i % 2 ? '#d96a2a' : '#9a52c0'} />
      </g>
    ))}
    {hubs.map(([k, x, y, r], i) => (
      <g key={i}>
        {r < 5 && <circle cx={gx(x)} cy={gy(y)} r={r + 4} fill="url(#halo)" />}
        <circle cx={gx(x)} cy={gy(y)} r={r} fill={shade[k]} />
      </g>
    ))}
    <rect x="222" y="163" width="462" height="11" fill="#0c1220" fillOpacity="0.9" />
    <text x="225" y="171" fontSize="8" fontFamily={mono} fill="#d5dce6">{PIPE}</text>
  </svg>
);

/* ---------- small repeated parts ---------- */

const categories: [string, string][] = [
  ['Database', c.blue], ['HTTP/Network', c.green], ['File I/O', c.amber], ['Framework', c.violet],
  ['Built-in', c.grey], ['Cache', c.cyan], ['Queue', c.pink], ['User Code', c.orange],
];

const CategoryLegend = () => (
  <Line $gap={12}>
    {categories.map(([name, color]) => (
      <Key key={name}><Dot $color={color} />{name}</Key>
    ))}
  </Line>
);

const HintList = ({ items }: { items: string[][] }) => (
  <Hints>
    {items.map((parts) => (
      <Hint key={parts[0]}>
        {parts.map((t, i) => (i % 2 ? <span key={t}>{t}</span> : <Kbd key={t}>{t}</Kbd>))}
      </Hint>
    ))}
  </Hints>
);

const SearchField = ({ id, label, width, height, bare }: { id: string; label: string; width?: number; height?: number; bare?: boolean }) => (
  <SearchBox htmlFor={id} $width={width} $height={height} $bare={bare}>
    <Search size={12} />
    <SearchInput id={id} type="text" placeholder={label} aria-label={label} />
  </SearchBox>
);

const CardTop = ({ title, sub, children }: { title: string; sub: string; children?: React.ReactNode }) => (
  <CardHead>
    <div>
      <CardTitle>{title}</CardTitle>
      <p>{sub}</p>
    </div>
    {children}
  </CardHead>
);

type PlotProps = { ticks: string[]; labelX: number; axisX: number; zeroX: number; spike?: boolean };
const UsagePlot = ({ ticks, labelX, axisX, zeroX, spike }: PlotProps) => (
  <Plot viewBox="0 0 326 126" role="img">
    {ticks.map((t, i) => {
      const y = 10 + (68 * i) / (ticks.length - 1);
      return (
        <g key={t}>
          <line x1={axisX - 3} x2="315" y1={y} y2={y} stroke={i === ticks.length - 1 ? '#3a485d' : '#273447'} />
          <text x={labelX} y={y + 2} fontSize="8" fontFamily={sans} textAnchor="end" fill="#a3b0c2">{t}</text>
        </g>
      );
    })}
    <line x1={axisX} x2={axisX} y1="12" y2="78" stroke="#334155" />
    <line x1={zeroX} x2={zeroX} y1="12" y2="78" stroke={spike ? '#dd7a3c' : '#273447'} strokeWidth={spike ? 2 : 1} />
    <text x={zeroX} y="87" fontSize="8" fontFamily={sans} textAnchor="middle" fill="#a3b0c2">0</text>
  </Plot>
);

type ChartProps = { tag: string; title: string; sub: string; unit: string; keys: [string, string][]; plot: PlotProps; first?: boolean };
const ChartBlock = ({ tag, title, sub, unit, keys, plot, first }: ChartProps) => (
  <ChartSection $first={first}>
    <ChartTag>{tag}</ChartTag>
    <ChartTitle>{title}</ChartTitle>
    <ChartSub>{sub}</ChartSub>
    <ChartLegend>
      <StrongLabel as="span">{unit}</StrongLabel>
      {keys.map(([name, color]) => <Key key={name} $gap={6}><Dot $color={color} />{name}</Key>)}
    </ChartLegend>
    <UsagePlot {...plot} />
    <AxisTitle>Time (ms)</AxisTitle>
  </ChartSection>
);

const runtime: [string, string, string?, string?][] = [
  ['Trace Duration', '12.97ms'],
  ['Functions', '1,149', 'Unique functions observed across the trace'],
  ['Total Calls', '40,079'],
];
const dataAccess: [string, string, string?, string?][] = [
  ['DB Queries', '4', undefined, '#11abc6'],
  ['Slowest Query', '1.12ms', 'Longest single query execution, including fetch or hydration', '#11abc6'],
  ['N+1 Patterns', 'None', undefined, '#18a877'],
];

const StatGroup = ({ title, items }: { title: string; items: typeof runtime }) => (
  <Group>
    <StrongLabel>{title}</StrongLabel>
    {items.map(([name, value, note, color]) => (
      <StatRow key={name}>
        <StatText>{name}{note && <StatNote>{note}</StatNote>}</StatText>
        <StatValue $color={color}>{value}</StatValue>
      </StatRow>
    ))}
  </Group>
);

const systemTiles = [
  ['HOST', 'Bens-MacBook-Pro.local', 'Darwin'],
  ['PLATFORM', 'macOS 26.3', 'arm64 • Kernel 25.3.0'],
  ['CPU', '16 cores', 'Apple M3 Max'],
  ['MEMORY', '48.00 GB', 'Swap 8.00 GB'],
];

const disks: [string, number, string, string][] = [
  ['/', 69.2, '640.88 GB used of 926.35 GB', '285.47 GB free'],
  ['/System/Volumes/Data', 69.2, '640.88 GB used of 926.35 GB', '285.47 GB free'],
  ['/Volumes/Claude', 66.9, '643.99 MB used of 961.96 MB', '317.97 MB free'],
  ['/Volumes/Notion Installer', 66.4, '491.42 MB used of 739.96 MB', '248.54 MB free'],
];

const Sidebar = () => (
  <Column>
    <SideCard $flush>
      <SideTitle>KEY METRICS</SideTitle>
      <TileGrid>
        <MetricTile><SpacedLabel>WALL TIME</SpacedLabel><BigValue $color="#f7931a">12.09ms</BigValue></MetricTile>
        <MetricTile><SpacedLabel>CPU TIME</SpacedLabel><BigValue $color={c.violet}>0µs</BigValue></MetricTile>
      </TileGrid>
      <StatGroup title="RUNTIME" items={runtime} />
      <StatGroup title="DATA ACCESS" items={dataAccess} />
      <Group>
        <SpanHead><StrongLabel>ACTIVE SPANS</StrongLabel><span>1</span></SpanHead>
        <SpanChip>http.GET./search</SpanChip>
      </Group>
      <ChartBlock
        first
        tag="MEMORY USAGE" title="Memory Usage Over Time" sub="System and process memory consumption during profiling"
        unit="MEMORY" keys={[['System Memory', c.blue], ['Process Memory', c.green]]}
        plot={{ ticks: ['39.1 GB', '34.2 GB', '29.3 GB', '24.4 GB', '19.5 GB', '14.7 GB', '9.77 GB', '4.88 GB', '0 B'], labelX: 61, axisX: 71, zeroX: 193 }}
      />
      <ChartBlock
        tag="CPU USAGE" title="CPU Usage Over Time" sub="System CPU utilization percentage"
        unit="CPU USAGE" keys={[['CPU Usage', c.orange]]}
        plot={{ ticks: ['1800%', '1600%', '1400%', '1200%', '1000%', '800%', '600%', '400%', '200%', '0%'], labelX: 48, axisX: 59, zeroX: 187, spike: true }}
      />
    </SideCard>

    <SideCard>
      <SideTitle>TIME BREAKDOWN</SideTitle>
      <SplitBar>
        <SplitPart $color={c.blue} style={{ flex: 90.7 }} />
        <SplitPart $color={c.cyan} style={{ flex: 9.3 }} />
      </SplitBar>
      <BreakRow><Key $gap={6}><Dot $color={c.blue} $size={8} />Compute</Key><Share>90.7%</Share><Amount>10.97ms</Amount></BreakRow>
      <BreakRow><Key $gap={6}><Dot $color={c.cyan} $size={8} />Database</Key><Share>9.3%</Share><Amount>1.12ms</Amount></BreakRow>
    </SideCard>

    <SideCard>
      <SideTitle>SYSTEM STATS</SideTitle>
      <TileGrid>
        {systemTiles.map(([l, v, s]) => (
          <SystemTile key={l}><TileLabel>{l}</TileLabel><TileValue>{v}</TileValue>{s}</SystemTile>
        ))}
      </TileGrid>
    </SideCard>

    <SideCard>
      <SideTitle>DISK USAGE</SideTitle>
      <Stack $gap={8}>
        {disks.map(([path, pct, used, free]) => (
          <div key={path}>
            <DiskLine><DiskPath>{path}</DiskPath><DiskPct>{pct}%</DiskPct></DiskLine>
            <DiskLine $dim><span>{used}</span><span>{free}</span></DiskLine>
            <DiskTrack><DiskFill style={{ width: `${pct}%` }} /></DiskTrack>
          </div>
        ))}
      </Stack>
    </SideCard>
  </Column>
);

/* ---------- main sections ---------- */

const HeroSection = () => (
  <Hero>
    <HeroHead>
      <HeroTitle><Badge $tone="green">GET</Badge><HeroName>GET search</HeroName><Badge $tone="teal">200</Badge></HeroTitle>
      <HeroMeta><Badge $tone="green">local</Badge><span>09/04/2026, 13:35:20</span><Badge $tone="blue">Read only</Badge></HeroMeta>
    </HeroHead>
    <HeroBody>
      <Stack $gap={10}>
        <div>
          <GroupLabel>REQUEST</GroupLabel>
          <Field $wide><FieldLabel>URI</FieldLabel><FieldValue $mono>http://localhost:8000/search?q=Post</FieldValue></Field>
        </div>
        <div>
          <GroupLabel>CLIENT</GroupLabel>
          <Field $wide><FieldLabel>USER AGENT</FieldLabel><FieldValue $mono $inset>Mozilla/5.0 (Macintosh; Intel Mac OS X 10.15; rv:149.0) Gecko/20100101 Firefox/149.0</FieldValue></Field>
        </div>
      </Stack>
      <div>
        <GroupLabel>CONTEXT</GroupLabel>
        <Pair>
          <Field><FieldLabel>DURATION</FieldLabel><FieldValue $hot>12.97ms</FieldValue></Field>
          <Field><FieldLabel>IP ADDRESS</FieldLabel><FieldValue $mono>127.0.0.1</FieldValue></Field>
          <Field><FieldLabel>HOST</FieldLabel><FieldValue>Bens-MacBook-Pro.local</FieldValue></Field>
          <Field><FieldLabel>PHP</FieldLabel><FieldValue>8.4.5</FieldValue></Field>
          <Field $wide><FieldLabel>TRACE ID</FieldLabel><FieldValue $mono>019d7274-590d-72bc-8a02-2be5793551ef</FieldValue></Field>
        </Pair>
      </div>
    </HeroBody>
  </Hero>
);

const FlameCard = () => (
  <Card>
    <CardTop title="Flame Graph" sub="Interactive call stack visualization">
      <MetricSelect aria-label="Metric"><option>Wall Time</option></MetricSelect>
    </CardTop>
    <CardBody>
      <FlamePanel>
        <Line $gap={12} $between>
          <Line $gap={12}><Muted>Showing: <b>Wall Time</b></Muted><Badge $tone="plain">Canvas</Badge></Line>
          <Caption>ACTIONS</Caption>
        </Line>
        <Line $gap={6} $top={8}>
          <ToolButton><Camera size={12} />PNG</ToolButton>
          <ToolButton><RotateCcw size={12} />Reset</ToolButton>
        </Line>
        <BlockCaption htmlFor="fn">SEARCH</BlockCaption>
        <SearchField id="fn" label="Search functions..." height={26} bare />
      </FlamePanel>
      <FlameSvg viewBox="0 0 1061 794" role="img" aria-label="Flame graph">
        <FlameFrames width={1061} height={794} labels />
        <rect x="0" y="791" width="1061" height="2" fill="#2f8fe0" />
      </FlameSvg>
      <MiniMap>
        <svg viewBox="0 0 1061 44" preserveAspectRatio="none">
          <g opacity="0.6"><FlameFrames width={1061} height={41} /></g>
          <rect x="0" y="12" width="2" height="20" fill="#3b82f6" />
          <rect x="1059" y="12" width="2" height="20" fill="#3b82f6" />
        </svg>
      </MiniMap>
      <LegendPanel>
        <Line $gap={12}><Caption>LEGEND</Caption><CategoryLegend /></Line>
        <Line $gap={12}>
          <Caption>FILTERS</Caption>
          <Muted as="label" htmlFor="min-duration">Min duration:</Muted>
          <Range id="min-duration" type="range" defaultValue={0} $width={165} $thumb="#3b82f6" $size={14} />
          <OffValue>Off<small>Applied</small></OffValue>
          <Key as="label" $gap={6}><Check type="checkbox" />Collapse vendor</Key>
        </Line>
      </LegendPanel>
      <HintList items={[['Click', 'zoom in'], ['Esc', 'reset'], ['←→', 'siblings'], ['↑', 'child', '↓', 'parent'], ['/', 'search'], ['Enter', 'zoom selected']]} />
    </CardBody>
  </Card>
);

const insights: { title: string; tag?: string; text: string; chips: string[] }[] = [
  { title: 'Low CPU utilization detected', tag: '0% CPU efficiency', text: 'Only 0% of wall time is CPU work. The application is mostly waiting on I/O.', chips: [] },
  {
    title: '92 high fan-out functions detected', tag: '14 children',
    text: 'These functions call many different children, indicating orchestration points. Consider whether all sub-calls are necessary or if some can be deferred or batched.',
    chips: ['Symfony\\Component\\HttpFoundation\\Cookie::__toString (14 callees)', 'Symfony\\Component\\Routing\\RouteCompiler::compilePattern (13 callees)', `${NS}Container\\Container::resolve (12 callees)`],
  },
  {
    title: '97% of time spent in vendor/library code', tag: '329.40ms',
    text: "Most execution time is in third-party code. Check if libraries are configured optimally, caching is enabled, and you're not calling expensive library methods in hot loops.",
    chips: [`${PREP} (11.22ms)`, `${KERN} (11.22ms)`, `${NS}Routing\\Router::dispatch (11.20ms)`],
  },
  {
    title: '1 function called from many distinct paths',
    text: 'These functions appear in 5+ different call stacks. If they produce the same result, consider caching or memoizing to avoid redundant computation.',
    chips: [`${PIPE} (6 paths, 53.43ms)`],
  },
];

const InsightsCard = () => (
  <Card>
    <CardTop title="Performance Insights" sub="Auto-detected patterns and optimization opportunities" />
    <CardBody>
      {insights.map((it) => (
        <Insight key={it.title}>
          <Lightbulb size={18} strokeWidth={1.5} />
          <div>
            <Line $gap={7}><InsightTitle>{it.title}</InsightTitle>{it.tag && <InsightTag>{it.tag}</InsightTag>}</Line>
            <InsightText>{it.text}</InsightText>
            <Chips>{it.chips.map((x) => <Chip key={x}>{x}</Chip>)}</Chips>
          </div>
        </Insight>
      ))}
    </CardBody>
  </Card>
);

const src = '/Users/ben/Projects/Perfbase/laravel-test/vendor/laravel/framework/src/Illuminate/';
const calls: [string, string][] = [
  [PREP, 'Pipeline/Pipeline.php:178'],
  [KERN, 'Foundation/Http/Kernel.php:197'],
  [`${NS}Routing\\Router::dispatch`, 'Routing/Router.php:749'],
  [`${NS}Routing\\Router::dispatchToRoute`, 'Routing/Router.php:762'],
  [`${NS}Routing\\Router::runRoute`, 'Routing/Router.php:793'],
  [`${NS}Routing\\Router::runRouteWithinStack`, 'Routing/Router.php:811'],
  [`${NS}Pipeline\\Pipeline::then`, 'Pipeline/Pipeline.php:126'],
  [PIPE, 'Pipeline/Pipeline.php:195'],
  [`${NS}Cookie\\Middleware\\EncryptCookies::handle`, 'Cookie/Middleware/EncryptCookies.php:72'],
  [PIPE, 'Pipeline/Pipeline.php:195'],
  [`${NS}Cookie\\Middleware\\AddQueuedCookiesToResponse::handle`, 'Cookie/Middleware/AddQueuedCookiesToResponse.php:34'],
  [PIPE, 'Pipeline/Pipeline.php:195'],
  [`${NS}Session\\Middleware\\StartSession::handle`, 'Session/Middleware/StartSession.php:49'],
];

const heat: [string, string][] = [
  ['<1ms', '#2f3c50'], ['<10ms', c.blue], ['<50ms', c.cyan], ['<100ms', c.green], ['<500ms', c.amber], ['<1s', c.orange], ['≥1s', '#ef4444'],
];

const TreeCard = () => (
  <Card>
    <CardTop title="Call Tree" sub="Hierarchical function call relationships" />
    <CardBody>
      <TreeBox>
        <TreeTools>
          <SearchField id="methods" label="Search methods..." width={352} />
          <Line $gap={6}>
            <SolidButton>Expand all</SolidButton>
            <SolidButton>Collapse all</SolidButton>
            <SolidButton $hot>Hot path</SolidButton>
          </Line>
          <Key as="label" $gap={6}><Check type="checkbox" />Hide vendor</Key>
        </TreeTools>
        <HeatBar>
          <b>Heat (wall time):</b>
          {heat.map(([name, color]) => <Key key={name} $gap={7}><Dot $square $color={color} />{name}</Key>)}
        </HeatBar>
        <TreeHead><TreeHeadCell>Method Call</TreeHeadCell></TreeHead>
        <TreeList>
          {calls.map(([name, path], i) => (
            <TreeRow key={i} $depth={i}>
              <Caret aria-label="Collapse">▼</Caret>
              <div>
                <TreeName>{name} <small>(1 calls)</small></TreeName>
                <TreePath>{src + path}</TreePath>
              </div>
            </TreeRow>
          ))}
        </TreeList>
      </TreeBox>
      <StatGrid $cols={3}>
        <Stat><dt>Root Functions</dt><StatFigure>3</StatFigure></Stat>
        <Stat><dt>Total Functions</dt><StatFigure>100</StatFigure></Stat>
        <Stat><dt>Max Depth</dt><StatFigure>49</StatFigure></Stat>
      </StatGrid>
    </CardBody>
  </Card>
);

const GraphCard = () => (
  <Card>
    <CardTop title="Call Graph" sub="Force-directed visualization of function relationships with automatic large-trace simplification" />
    <CardBody>
      <Line $gap={12} $between>
        <Line $gap={13}>
          <Muted>Showing: <b>Wall Time</b></Muted>
          <Muted>Nodes: <b>595</b></Muted>
          <Muted>Links: <b>821</b></Muted>
          <LinkNote>Showing top 821 of 2,256 links</LinkNote>
          <Badge $tone="plain">Force Graph</Badge>
        </Line>
        <SearchField id="nodes" label="Search nodes..." width={163} />
      </Line>
      <PanelRow>
        <ToolPanel>
          <Caption>VIEW</Caption>
          <Line $gap={5} $top={4}>
            <ToolButton><GitBranch size={11} />Force</ToolButton>
            <ToolButton $on><Layers size={11} />Cluster</ToolButton>
            <ToolButton $off><MapIcon size={11} />Map</ToolButton>
            <ToolButton>Fit</ToolButton>
            <ToolButton><RotateCcw size={11} />Reset</ToolButton>
          </Line>
        </ToolPanel>
        <ToolPanel>
          <Caption>ANALYSIS</Caption>
          <Line $gap={5} $top={4}>
            <ToolButton><TrendingUp size={11} />Critical Path</ToolButton>
            <ToolButton><TriangleAlert size={11} />Bottlenecks</ToolButton>
            <ToolButton><RefreshCw size={11} />Cycles</ToolButton>
          </Line>
        </ToolPanel>
        <ToolPanel>
          <Caption>SIMULATION</Caption>
          <Line $gap={5} $top={4}>
            <ToolButton $off><Play size={11} />Flow</ToolButton>
            <ToolButton><Zap size={11} />Reheat</ToolButton>
            <ToolButton><Download size={11} />SVG</ToolButton>
          </Line>
        </ToolPanel>
      </PanelRow>
      <GraphFrame><CallGraph /></GraphFrame>
      <Line $gap={12} $top={13} $between>
        <CategoryLegend />
        <Line $gap={9}>
          <Muted>Density:</Muted>
          <AutoButton>Auto</AutoButton>
          <Muted as="label" htmlFor="min-value">Min value:</Muted>
          <Range id="min-value" type="range" defaultValue={0} $width={74} $thumb="#fff" $size={12} />
          <GraphOff>Off</GraphOff>
        </Line>
      </Line>
      <GraphNote>Large-trace simplification is active. Important nodes remain visible while low-signal links are reduced for readability.</GraphNote>
      <HintList items={[['Drag node', 'reposition'], ['Drag space', 'pan'], ['⌘/Ctrl + Scroll', 'zoom'], ['Click', 'select'], ['Double-click', 'isolate']]} />
    </CardBody>
  </Card>
);

const queries: [string, string, string, string, string][] = [
  ['update ? set ? = ?, ? = ?, ? = ?, ? = ?, ? = ? where ? = ?', 'UPDATE', '1.12ms', '1.12ms', '0µs'],
  ['select * from ? where ? like ? or ? like ? limit ?', 'SELECT', '44µs', '30µs', '14µs'],
  ['select * from ? where ?.? in (?, ?, ?, ?, ?, ?, ?, ?, ?)', 'SELECT', '39µs', '21µs', '18µs'],
  ['select * from ? where ? = ? limit ?', 'SELECT', '21µs', '17µs', '4µs'],
];

const QueriesCard = () => (
  <Card>
    <CardTop title="Database Queries" sub="Query analysis and N+1 detection" />
    <CardBody>
      <Tabs><Tab $on>All Queries (4)</Tab><Tab>N+1 Patterns (0)</Tab></Tabs>
      <Intro>Query timings include both statement execution and result fetching or hydration. Preparation time is excluded.</Intro>
      <SearchField id="queries" label="Search queries..." width={302} height={28} />
      <TableFrame>
        <Table>
          <colgroup><Col /><Col $width={75} /><Col $width={90} /><Col $width={68} /><Col $width={157} /><Col $width={158} /><Col $width={121} /></colgroup>
          <thead>
            <tr>
              <Th>Query</Th>
              <Th $align="center">Source<SortMark /></Th>
              <Th $align="center">Type<SortMark /></Th>
              <Th $align="right">Calls<SortMark /></Th>
              <Th $align="right">Total Time<SortMark>↓</SortMark></Th>
              <Th $align="right">Avg Time<SortMark /></Th>
              <Th $align="right">Range<SortMark /></Th>
            </tr>
          </thead>
          <tbody>
            {queries.map(([sql, type, total, exec, fetch]) => (
              <tr key={sql}>
                <Td><QueryText href="#query">{sql}</QueryText></Td>
                <Td $align="center"><Pill>pdo</Pill></Td>
                <Td $align="center"><Pill>{type}</Pill></Td>
                <Td $align="right"><CellFigure>1</CellFigure></Td>
                <Td $align="right"><CellFigure $bold>{total}</CellFigure>Exec {exec} · Fetch {fetch}</Td>
                <Td $align="right"><CellFigure>{total}</CellFigure>Exec {exec} · Fetch {fetch}</Td>
                <Td $align="right">{total} – {total}</Td>
              </tr>
            ))}
          </tbody>
        </Table>
      </TableFrame>
      <StatGrid $cols={5}>
        <Stat><dt>Total Queries</dt><StatFigure $mono>4</StatFigure></Stat>
        <Stat><dt>Total Calls</dt><StatFigure $mono>4</StatFigure></Stat>
        <Stat><dt>Total DB Time</dt><StatFigure $mono>1.23ms</StatFigure><StatExtra>Exec 1.19ms · Fetch 36µs</StatExtra></Stat>
        <Stat><dt>Execution Time</dt><StatFigure $mono>1.19ms</StatFigure></Stat>
        <Stat><dt>Hydration Time</dt><StatFigure $mono>36µs</StatFigure></Stat>
        <Stat><dt>Sources</dt><StatFigure>pdo</StatFigure></Stat>
      </StatGrid>
    </CardBody>
  </Card>
);

export default function App() {
  return (
    <>
      <Global />
      <TopBar>
        <TopInner>
          <div><TraceTag>SHARED TRACE</TraceTag><TraceName>019d7274</TraceName></div>
          <TopActions>
            <ThemeButton aria-label="Theme"><Moon size={14} /><ChevronDown size={11} /></ThemeButton>
            <SignIn href="#sign-in">Sign in to Perfbase</SignIn>
          </TopActions>
        </TopInner>
      </TopBar>
      <Main>
        <HeroSection />
        <Sidebar />
        <Column>
          <FlameCard />
          <InsightsCard />
          <TreeCard />
          <GraphCard />
          <QueriesCard />
        </Column>
      </Main>
    </>
  );
}
